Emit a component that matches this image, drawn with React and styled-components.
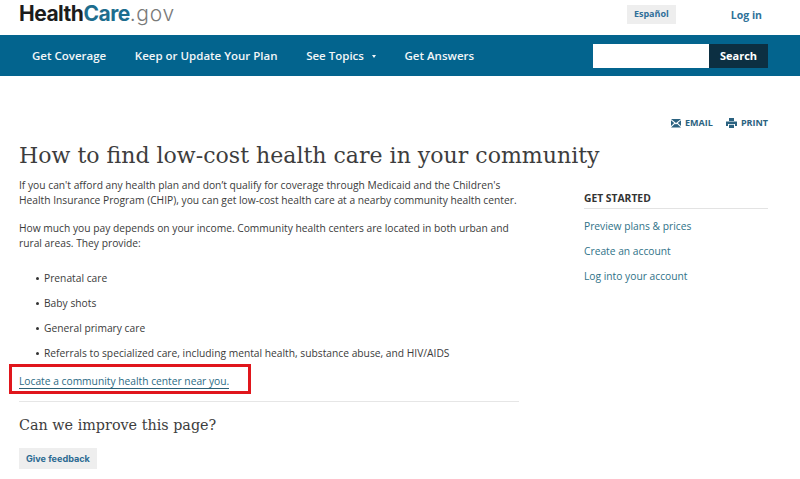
import React from "react";
import styled, { createGlobalStyle } from "styled-components";

const GlobalStyle = createGlobalStyle`
  html, body { margin: 0; padding: 0; background: #fff; }
  body { font-family: "Open Sans", "Liberation Sans", sans-serif; color: #3b3b3b; overflow: hidden; }
  a { text-decoration: none; }
`;

const Page = styled.div`
  width: 800px;
  height: 479px;
  overflow: hidden;
`;

const TopBar = styled.header`
  height: 35px;
  display: flex;
  align-items: center;
  padding: 0 38px 6px 19px;
  box-sizing: border-box;
`;

const Logo = styled.div`
  font-family: Inter, "Liberation Sans", sans-serif;
  font-size: 21px;
  font-weight: 700;
  letter-spacing: -0.5px;
  color: #1c1c1c;
  margin: 0 auto 2px 0;
  span { color: #1d6d8e; }
  em { font-style: normal; font-weight: 300; color: #7a7a7a; letter-spacing: 0.7px; }
`;

const LangButton = styled.a`
  background: #eeeeee;
  color: #2f6f99;
  font-size: 9px;
  font-weight: 700;
  padding: 3px 7px 4px;
  line-height: 12px;
  margin: 0 55px 0 0;
`;

const LoginLink = styled.a`
  color: #2f7299;
  font-size: 10.5px;
  font-weight: 700;
  margin-top: 1px;
`;

const NavBar = styled.nav`
  height: 41px;
  background: #03648e;
  display: flex;
  align-items: center;
  padding: 0 32px;
`;

const NavLink = styled.a`
  color: #f2f6f8;
  font-size: 11.5px;
  font-weight: 600;
  margin-right: 28.6px;
  display: flex;
  align-items: center;
  gap: 8px;
`;

const Caret = styled.i`
  width: 0;
  height: 0;
  border-left: 2.5px solid transparent;
  border-right: 2.5px solid transparent;
  border-top: 3px solid #f2f6f8;
  margin-top: 1px;
`;

const SearchForm = styled.form`
  margin-left: auto;
  display: flex;
`;

const SearchInput = styled.input`
  width: 116px;
  height: 24px;
  border: 0;
  padding: 0;
  background: #fff;
`;

const SearchButton = styled.button`
  width: 59px;
  height: 24px;
  border: 0;
  padding: 0;
  background: #0c2f42;
  color: #fff;
  font-family: inherit;
  font-size: 11px;
  font-weight: 700;
`;

const ShareRow = styled.div`
  display: flex;
  justify-content: flex-end;
  gap: 13px;
  padding: 40px 32px 0 0;
  height: 14px;
`;

const ShareLink = styled.a`
  display: flex;
  align-items: center;
  gap: 4px;
  color: #2b6280;
  font-size: 9px;
  font-weight: 700;
  line-height: 14px;
`;

const Title = styled.h1`
  font-family: "DejaVu Serif", "Liberation Serif", serif;
  font-size: 22.05px;
  font-weight: 400;
  line-height: 32px;
  color: #3d3d3d;
  margin: 10px 0 0 19px;
  white-space: nowrap;
`;

const Columns = styled.div`
  display: flex;
  padding: 0 32px 0 19px;
`;

const Main = styled.main`
  width: 500px;
`;

const Para = styled.p`
  font-size: 10.25px;
  line-height: 15px;
  margin: 6px 0 13px;
  white-space: nowrap;
`;

const Bullets = styled.ul`
  list-style: none;
  margin: 20px 0 0;
  padding: 0;
`;

const Bullet = styled.li`
  font-size: 10.25px;
  line-height: 15px;
  height: 15px;
  margin-bottom: 10px;
  padding-left: 25px;
  position: relative;
  white-space: nowrap;
  &::before {
    content: "";
    position: absolute;
    left: 17px;
    top: 6px;
    width: 3px;
    height: 3px;
    border-radius: 50%;
    background: #333;
  }
`;

const LocateRow = styled.div`
  position: relative;
  height: 15px;
  line-height: 15px;
  margin-top: 11px;
  &::after {
    content: "";
    position: absolute;
    left: -10px;
    top: -8px;
    width: 236px;
    height: 24px;
    border: 3px solid #e0161c;
  }
`;

const LocateLink = styled.a`
  font-size: 10.25px;
  color: #2c6b85;
  border-bottom: 1px solid #2c5f75;
`;

const Divider = styled.hr`
  border: 0;
  border-top: 1px solid #e6e6e6;
  margin: 14px 0 0;
`;

const SubTitle = styled.h2`
  font-family: "DejaVu Serif", "Liberation Serif", serif;
  font-size: 14.35px;
  font-weight: 400;
  line-height: 22px;
  color: #3d3d3d;
  margin: 12px 0 0;
`;

const FeedbackButton = styled.a`
  display: inline-block;
  margin-top: 12px;
  background: #eeeeee;
  color: #2b6a92;
  font-family: Inter, "Liberation Sans", sans-serif;
  font-size: 9.1px;
  font-weight: 700;
  line-height: 21px;
  padding: 0 7px;
`;

const Aside = styled.aside`
  width: 184px;
  margin-left: 65px;
  padding-top: 19px;
`;

const AsideTitle = styled.h3`
  font-size: 10.3px;
  font-weight: 700;
  line-height: 15px;
  color: #333;
  margin: 0;
  padding-bottom: 2px;
  border-bottom: 1px solid #e3e3e3;
`;

const AsideLink = styled.a`
  display: block;
  font-size: 10.25px;
  line-height: 15px;
  color: #2f7288;
  margin-top: 10px;
  &:first-of-type { margin-top: 10px; }
`;

const MailIcon = () => (
  <svg width="10" height="9" viewBox="0 0 10 9">
    <path d="M0 0h10L5 4.2z M0 1.4v6L3.2 4.2z M10 1.4v6L6.8 4.2z M0 9l4-4 1 .8 1-.8 4 4z" fill="#2b6280" transform="scale(1 0.95)" />
  </svg>
);

const PrintIcon = () => (
  <svg width="11" height="10" viewBox="0 0 11 10">
    <path d="M3 0h5v3H3z M0 3.5h11V8H9V6H2v2H0z M3 6.8h5V10H3z" fill="#2b6280" />
  </svg>
);

export default function App() {
  return (
    <Page>
      <GlobalStyle />
      <TopBar>
        <Logo>Health<span>Care</span><em>.gov</em></Logo>
        <LangButton>Español</LangButton>
        <LoginLink>Log in</LoginLink>
      </TopBar>
      <NavBar>
        <NavLink>Get Coverage</NavLink>
        <NavLink>Keep or Update Your Plan</NavLink>
        <NavLink>See Topics <Caret /></NavLink>
        <NavLink>Get Answers</NavLink>
        <SearchForm>
          <SearchInput />
          <SearchButton type="button">Search</SearchButton>
        </SearchForm>
      </NavBar>
      <ShareRow>
        <ShareLink><MailIcon />EMAIL</ShareLink>
        <ShareLink><PrintIcon />PRINT</ShareLink>
      </ShareRow>
      <Title>How to find low-cost health care in your community</Title>
      <Columns>
        <Main>
          <Para>
            If you can't afford any health plan and don’t qualify for coverage through Medicaid and the Children's<br />
            Health Insurance Program (CHIP), you can get low-cost health care at a nearby community health center.
          </Para>
          <Para>
            How much you pay depends on your income. Community health centers are located in both urban and<br />
            rural areas. They provide:
          </Para>
          <Bullets>
            <Bullet>Prenatal care</Bullet>
            <Bullet>Baby shots</Bullet>
            <Bullet>General primary care</Bullet>
            <Bullet>Referrals to specialized care, including mental health, substance abuse, and HIV/AIDS</Bullet>
          </Bullets>
          <LocateRow>
            <LocateLink>Locate a community health center near you.</LocateLink>
          </LocateRow>
          <Divider />
          <SubTitle>Can we improve this page?</SubTitle>
          <FeedbackButton>Give feedback</FeedbackButton>
        </Main>
        <Aside>
          <AsideTitle>GET STARTED</AsideTitle>
          <AsideLink>Preview plans &amp; prices</AsideLink>
          <AsideLink>Create an account</AsideLink>
          <AsideLink>Log into your account</AsideLink>
        </Aside>
      </Columns>
    </Page>
  );
}
